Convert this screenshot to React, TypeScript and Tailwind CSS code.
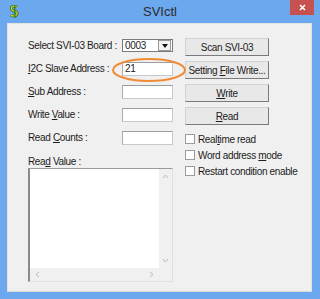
import React from 'react';

const U: React.FC<{ children: React.ReactNode }> = ({ children }) => (
    <span className="underline underline-offset-1">{children}</span>
);

const Field: React.FC<{ label: React.ReactNode; value?: string }> = ({ label, value }) => (
    <div className="h-[23px] flex items-center">
        <div className="w-[94px]">{label}</div>
        <div className="w-[51px] h-[14px] bg-white border border-[#c5c8ce] border-t-[#9a9da3] border-l-[#abadb3] flex items-center px-[2px]">
            {value}
        </div>
    </div>
);

const Btn: React.FC<{ children: React.ReactNode }> = ({ children }) => (
    <div className="h-[18px] w-[84px] flex items-center justify-center bg-[#e8e8e8] border border-[#d2d2d2] border-r-[#7a7a7a] border-b-[#7a7a7a]">
        <span>{children}</span>
    </div>
);

const Check: React.FC<{ children: React.ReactNode }> = ({ children }) => (
    <div className="h-[16px] flex items-center gap-[3px]">
        <div className="w-[10px] h-[10px] bg-white border border-[#9a9a9a]" />
        <span>{children}</span>
    </div>
);

const Chevron: React.FC<{ d: string }> = ({ d }) => (
    <svg width="7" height="7" viewBox="0 0 7 7">
        <path d={d} fill="none" stroke="#b9b9b9" strokeWidth="1" />
    </svg>
);

const App: React.FC = () => {
    return (
        <div
            className="w-[320px] h-[299px] bg-[#6ca8ee] flex flex-col text-[10px] tracking-[-0.35px] text-[#1c1c1c]"
            style={{ fontFamily: '"Liberation Sans", Arial, sans-serif' }}
        >
            {/* title bar */}
            <div className="h-[23px] relative flex items-center justify-center shrink-0">
                <svg className="absolute left-[9px] top-[5px]" width="11" height="13" viewBox="0 0 11 13">
                    <path d="M8 2 C4 0 1 2 3 5 C5 7 9 6 8 9 C7 12 3 11 2 10" fill="none" stroke="#2f7d1f" strokeWidth="3" />
                    <path d="M8 2 C4 0 1 2 3 5 C5 7 9 6 8 9 C7 12 3 11 2 10" fill="none" stroke="#e3c83a" strokeWidth="1.2" />
                    <rect x="5" y="0" width="1.5" height="13" fill="#3c8a2a" />
                </svg>
                <span className="text-[13px] tracking-normal text-[#2b2b2b]">SVIctl</span>
                <div className="absolute right-[6px] top-0 w-[24px] h-[15px] bg-[#c75050] flex items-center justify-center">
                    <svg width="7" height="7" viewBox="0 0 7 7">
                        <path d="M1 1 L6 6 M6 1 L1 6" stroke="#ffffff" strokeWidth="1.6" />
                    </svg>
                </div>
            </div>

            {/* client area */}
            <div className="ml-[7px] mr-[8px] mb-[7px] flex-1 bg-[#f0f0f0] border border-[#e2e2e2] border-b-[#d8d8d8] relative flex pl-[20px]">
                <div className="w-[145px] pt-[10px] flex flex-col">
                    <div className="h-[23px] flex items-center">
                        <div className="w-[94px]">Select SVI-03 Board :</div>
                        <div className="w-[51px] h-[13px] bg-white border border-[#7a7a7a] flex items-center">
                            <span className="flex-1 pl-[2px]">0003</span>
                            <div className="w-[13px] h-[11px] border border-[#9a9a9a] bg-[#f2f2f2] mr-[1px] flex items-center justify-center">
                                <svg width="6" height="4" viewBox="0 0 6 4">
                                    <path d="M0 0 L6 0 L3 4 Z" fill="#111111" />
                                </svg>
                            </div>
                        </div>
                    </div>
                    <Field label={<><U>I</U>2C Slave Address :</>} value="21" />
                    <Field label={<><U>S</U>ub Address :</>} />
                    <Field label={<>Write <U>V</U>alue :</>} />
                    <Field label={<>Read <U>C</U>ounts :</>} />
                    <div className="mt-[6px] h-[12px] flex items-center">
                        <span>Rea<U>d</U> Value :</span>
                    </div>
                    <div className="mt-[1px] h-[114px] flex flex-col bg-white border border-[#e0e0e0] border-t-[#9a9a9a] border-l-2 border-l-[#8a8a8a]">
                        <div className="flex-1 flex">
                            <div className="flex-1" />
                            <div className="w-[13px] bg-[#f0f0f0] flex flex-col items-center justify-between py-[4px]">
                                <Chevron d="M1 5 L3.5 2 L6 5" />
                                <Chevron d="M1 2 L3.5 5 L6 2" />
                            </div>
                        </div>
                        <div className="h-[13px] flex">
                            <div className="flex-1 bg-[#f0f0f0] flex items-center justify-between px-[4px]">
                                <Chevron d="M5 1 L2 3.5 L5 6" />
                                <Chevron d="M2 1 L5 3.5 L2 6" />
                            </div>
                            <div className="w-[13px] bg-[#f0f0f0]" />
                        </div>
                    </div>
                </div>

                <div className="ml-[12px] pt-[14px] flex flex-col">
                    <div className="flex flex-col gap-[5px]">
                        <Btn>Scan SVI-03</Btn>
                        <Btn>Setting <U>F</U>ile Write...</Btn>
                        <Btn><U>W</U>rite</Btn>
                        <Btn><U>R</U>ead</Btn>
                    </div>
                    <div className="mt-[6px] flex flex-col">
                        <Check>Real<U>t</U>ime read</Check>
                        <Check>Word address <U>m</U>ode</Check>
                        <Check>Restart condition enable</Check>
                    </div>
                </div>

                {/* highlight ellipse */}
                <svg className="absolute left-[103px] top-[33px]" width="76" height="26" viewBox="0 0 76 26">
                    <ellipse cx="38" cy="13" rx="36" ry="11" fill="none" stroke="#ef8a35" strokeWidth="2" />
                </svg>
            </div>
        </div>
    );
};

export default App;
